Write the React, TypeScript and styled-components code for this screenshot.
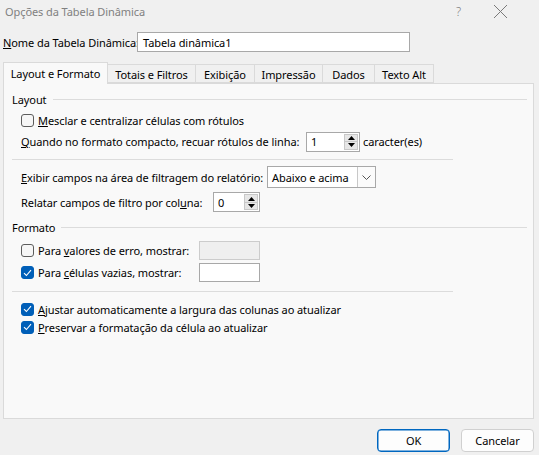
import styled, { createGlobalStyle } from 'styled-components'

const GlobalStyle = createGlobalStyle`
  html, body {
    margin: 0;
    padding: 0;
    background: #f0f0f0;
  }
  body {
    font-family: "Noto Sans", "Open Sans", sans-serif;
    font-size: 11px;
    letter-spacing: -0.08px;
    color: #000;
  }
  * {
    box-sizing: border-box;
  }
`

const tabs = [
  { id: 'layout', text: 'Layout e Formato', w: 105 },
  { id: 'totais', text: 'Totais e Filtros', w: 88 },
  { id: 'exibicao', text: 'Exibição', w: 59 },
  { id: 'impressao', text: 'Impressão', w: 68 },
  { id: 'dados', text: 'Dados', w: 52 },
  { id: 'alt', text: 'Texto Alt', w: 59 }
]

const SpinArrows = () => (
  <SpinButtons>
    <SpinHalf>
      <svg width="7" height="4" viewBox="0 0 7 4"><path d="M3.5 0 L7 4 L0 4 Z" fill="#000" /></svg>
    </SpinHalf>
    <SpinHalf $bottom>
      <svg width="7" height="4" viewBox="0 0 7 4"><path d="M0 0 L7 0 L3.5 4 Z" fill="#000" /></svg>
    </SpinHalf>
  </SpinButtons>
)

const Check: React.FC<{ checked?: boolean }> = ({ checked }) => (
  <CheckBox $checked={checked}>
    {checked && (
      <svg width="9" height="8" viewBox="0 0 9 8">
        <path d="M1 4.2 L3.4 6.5 L8 1.2" fill="none" stroke="#fff" strokeWidth="1.1" />
      </svg>
    )}
  </CheckBox>
)

const App: React.FC = () => (
  <>
    <GlobalStyle />
    <Window>
      <TitleBar>
        <Title>Opções da Tabela Dinâmica</Title>
        <TitleButtons>
          <Help>?</Help>
          <svg width="15" height="15" viewBox="0 0 15 15">
            <path d="M1 1 L14 14 M14 1 L1 14" stroke="#7a7a7a" strokeWidth="1" />
          </svg>
        </TitleButtons>
      </TitleBar>

      <NameRow>
        <Label $w={134}><u>N</u>ome da Tabela Dinâmica:</Label>
        <TextInput $w={273}>Tabela dinâmica1</TextInput>
      </NameRow>

      <TabStrip>
        {tabs.map((tab, i) => (
          <Tab key={tab.id} $active={i === 0} $w={tab.w}>{tab.text}</Tab>
        ))}
      </TabStrip>

      <Panel>
        <GroupHeader $mt={7}>
          <span>Layout</span>
          <GroupLine />
        </GroupHeader>
        <Row $mt={3} $h={20}>
          <Check />
          <Text><u>M</u>esclar e centralizar células com rótulos</Text>
        </Row>
        <Row $mt={1} $h={21}>
          <Label $w={285}><u>Q</u>uando no formato compacto, recuar rótulos de linha:</Label>
          <Spinner $w={54}>
            <span>1</span>
            <SpinArrows />
          </Spinner>
          <After>caracter(es)</After>
        </Row>
        <Separator $mt={7} />
        <Row $mt={6} $h={22}>
          <Label $w={246}><u>E</u>xibir campos na área de filtragem do relatório:</Label>
          <Select>
            <span>Abaixo e acima</span>
            <SelectButton>
              <svg width="9" height="5" viewBox="0 0 9 5">
                <path d="M0.5 0.5 L4.5 4.5 L8.5 0.5" fill="none" stroke="#555" strokeWidth="1" />
              </svg>
            </SelectButton>
          </Select>
        </Row>
        <Row $mt={4} $h={20}>
          <Label $w={192}>Relatar campos de filtro por col<u>u</u>na:</Label>
          <Spinner $w={47}>
            <span>0</span>
            <SpinArrows />
          </Spinner>
        </Row>

        <GroupHeader $mt={7}>
          <span>Formato</span>
          <GroupLine />
        </GroupHeader>
        <Row $mt={5} $h={20}>
          <Check />
          <Label $w={161}>Para <u>v</u>alores de erro, mostrar:</Label>
          <SmallInput $disabled />
        </Row>
        <Row $mt={2} $h={21}>
          <Check checked />
          <Label $w={161}>Para <u>c</u>élulas vazias, mostrar:</Label>
          <SmallInput />
        </Row>
        <Separator $mt={8} />
        <Row $mt={8} $h={18}>
          <Check checked />
          <Text><u>A</u>justar automaticamente a largura das colunas ao atualizar</Text>
        </Row>
        <Row $mt={0} $h={18}>
          <Check checked />
          <Text><u>P</u>reservar a formatação da célula ao atualizar</Text>
        </Row>
      </Panel>

      <Footer>
        <Button $primary>OK</Button>
        <Button>Cancelar</Button>
      </Footer>
    </Window>
  </>
)

export default App

const Window = styled.div`
  width: 539px;
  height: 455px;
  display: flex;
  flex-direction: column;
  background: #f0f0f0;
  overflow: hidden;
`
const TitleBar = styled.div`
  height: 22px;
  display: flex;
  align-items: center;
  justify-content: space-between;
  padding: 0 31px 0 5px;
`
const Title = styled.div`
  font-size: 11px;
  color: #808080;
`
const TitleButtons = styled.div`
  display: flex;
  align-items: center;
  gap: 30px;
  svg {
    margin-top: 1px;
  }
`
const Help = styled.span`
  font-size: 12px;
  color: #7a7a7a;
  font-weight: 300;
  margin-right: 2px;
`
const NameRow = styled.div`
  margin-top: 10px;
  height: 20px;
  display: flex;
  align-items: center;
  padding-left: 3px;
`
const Label = styled.span<{ $w: number }>`
  width: ${p => p.$w}px;
  flex: none;
  white-space: nowrap;
`
const Text = styled.span`
  white-space: nowrap;
`
const After = styled.span`
  margin-left: 3px;
  white-space: nowrap;
`
const TextInput = styled.div<{ $w: number }>`
  width: ${p => p.$w}px;
  height: 20px;
  border: 1px solid #a8a8a8;
  background: #fff;
  display: flex;
  align-items: center;
  padding-left: 5px;
`
const TabStrip = styled.div`
  margin-top: 10px;
  margin-left: 3px;
  height: 21px;
  display: flex;
  align-items: flex-end;
  position: relative;
  z-index: 1;
`
const Tab = styled.div<{ $active?: boolean; $w: number }>`
  width: ${p => p.$w}px;
  height: ${p => (p.$active ? 22 : 19)}px;
  margin-bottom: ${p => (p.$active ? -1 : 0)}px;
  display: flex;
  align-items: center;
  justify-content: center;
  border: 1px solid #dadada;
  border-bottom: ${p => (p.$active ? 'none' : '1px solid #dadada')};
  border-left: ${p => (p.$active ? '1px solid #dadada' : 'none')};
  background: ${p => (p.$active ? '#f9f9f9' : '#f0f0f0')};
  padding-top: ${p => (p.$active ? 0 : 1)}px;
  white-space: nowrap;
`
const Panel = styled.div`
  margin-left: 3px;
  width: 531px;
  height: 336px;
  background: #f9f9f9;
  border: 1px solid #dadada;
  display: flex;
  flex-direction: column;
  padding: 0 6px 0 8px;
`
const GroupHeader = styled.div<{ $mt: number }>`
  margin-top: ${p => p.$mt}px;
  height: 16px;
  display: flex;
  align-items: center;
  gap: 6px;
`
const GroupLine = styled.div`
  flex: 1;
  height: 1px;
  background: #dcdcdc;
`
const Separator = styled.div<{ $mt: number }>`
  margin-top: ${p => p.$mt}px;
  width: 441px;
  height: 1px;
  background: #dcdcdc;
  flex: none;
`
const Row = styled.div<{ $mt: number; $h: number }>`
  margin-top: ${p => p.$mt}px;
  height: ${p => p.$h}px;
  flex: none;
  display: flex;
  align-items: center;
  padding-left: 9px;
`
const CheckBox = styled.div<{ $checked?: boolean }>`
  width: 13px;
  height: 13px;
  border-radius: 3px;
  margin-right: 4px;
  flex: none;
  display: flex;
  align-items: center;
  justify-content: center;
  background: ${p => (p.$checked ? '#005fb8' : '#f6f6f6')};
  border: 1px solid ${p => (p.$checked ? '#005fb8' : '#5c5c5c')};
`
const Spinner = styled.div<{ $w: number }>`
  width: ${p => p.$w}px;
  height: 20px;
  border: 1px solid #a8a8a8;
  background: #fff;
  display: flex;
  align-items: center;
  justify-content: space-between;
  padding-left: 4px;
`
const SpinButtons = styled.div`
  width: 15px;
  height: 100%;
  display: flex;
  flex-direction: column;
  padding: 1px 1px 1px 0;
`
const SpinHalf = styled.div<{ $bottom?: boolean }>`
  flex: 1;
  display: flex;
  align-items: center;
  justify-content: center;
  background: #e6e6e6;
  border: 1px solid #c8c8c8;
  border-top: ${p => (p.$bottom ? 'none' : '1px solid #c8c8c8')};
  svg {
    margin-top: ${p => (p.$bottom ? 0 : 1)}px;
  }
`
const Select = styled.div`
  width: 109px;
  height: 22px;
  border: 1px solid #a8a8a8;
  background: #fff;
  display: flex;
  align-items: center;
  justify-content: space-between;
  padding-left: 4px;
`
const SelectButton = styled.div`
  width: 18px;
  height: 100%;
  border-left: 1px solid #c8c8c8;
  display: flex;
  align-items: center;
  justify-content: center;
  background: #fbfbfb;
`
const SmallInput = styled.div<{ $disabled?: boolean }>`
  width: 61px;
  height: 19px;
  border: 1px solid ${p => (p.$disabled ? '#cccccc' : '#a8a8a8')};
  background: ${p => (p.$disabled ? '#efefef' : '#fff')};
`
const Footer = styled.div`
  margin-top: 10px;
  display: flex;
  justify-content: flex-end;
  gap: 11px;
  padding-right: 5px;
`
const Button = styled.div<{ $primary?: boolean }>`
  width: 73px;
  height: 23px;
  border-radius: 4px;
  display: flex;
  align-items: center;
  justify-content: center;
  background: #fdfdfd;
  border: 1px solid ${p => (p.$primary ? '#0067c0' : '#d0d0d0')};
  box-shadow: ${p => (p.$primary ? 'inset 0 0 0 0.5px #0067c0' : 'none')};
`
